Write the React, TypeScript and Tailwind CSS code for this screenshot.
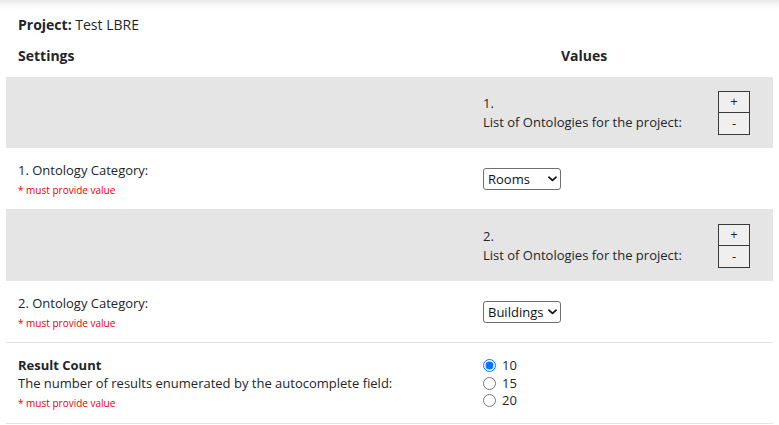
import { useState } from "react";

type OntologyRow = { id: number; value: string };

const ONTOLOGY_OPTIONS = ["Rooms", "Buildings", "People"];
const RESULT_COUNTS = ["10", "15", "20"];

function Chevron() {
  return (
    <svg viewBox="0 0 10 6" className="pointer-events-none absolute right-[4px] top-[8px] h-[6px] w-[9px]" aria-hidden="true">
      <path d="M1 1l4 3.6L9 1" fill="none" stroke="#111" strokeWidth="1.9" strokeLinecap="round" strokeLinejoin="round" />
    </svg>
  );
}

function Required() {
  return <p className="mt-[4px] text-[10px] leading-[14px] text-[#e3000b]">* must provide value</p>;
}

export default function App() {
  const [rows] = useState<OntologyRow[]>([
    { id: 1, value: "Rooms" },
    { id: 2, value: "Buildings" },
  ]);
  const [count, setCount] = useState("10");

  return (
    <div className="min-h-screen bg-white font-['Open_Sans',sans-serif] text-[13px] text-[#212529] shadow-[inset_0_10px_9px_-8px_rgba(0,0,0,0.13)]">
      <div className="px-[6px] pt-[15px]">
        <p className="px-3 text-[14px] leading-[20px]">
          <span className="font-bold">Project:</span> Test LBRE
        </p>

        <div className="grid grid-cols-[465px_1fr] pt-[11px] pb-[11px] text-[14px] font-bold leading-[20px]">
          <div className="px-3">Settings</div>
          <div className="pl-[90px]">Values</div>
        </div>

        {rows.map((row) => (
          <div key={row.id}>
            <div className="grid h-[71px] grid-cols-[465px_1fr] items-center bg-[#e5e5e5]">
              <div />
              <div className="flex items-center justify-between pl-3 pr-[23px]">
                <div className="leading-[19px]">
                  <p>{row.id}.</p>
                  <p>List of Ontologies for the project:</p>
                </div>
                <div className="flex flex-col">
                  <button className="h-[22px] w-[32px] border border-[#3a3a3a] bg-[#efefef] text-[13px] leading-none">+</button>
                  <button className="h-[22px] w-[32px] border border-t-0 border-[#3a3a3a] bg-[#efefef] text-[13px] leading-none">-</button>
                </div>
              </div>
            </div>

            <div className="grid h-[62px] grid-cols-[465px_1fr] items-center border-b border-[#e2e3e6]">
              <div className="px-3">
                <p className="leading-[18px]">{row.id}. Ontology Category:</p>
                <Required />
              </div>
              <div className="pl-3">
                <div className="relative w-[78px]">
                  <select
                    defaultValue={row.value}
                    className="h-[22px] w-full appearance-none rounded-[3px] border border-[#6f6f6f] bg-white pl-[4px] pr-[14px] text-[13px] leading-[20px] text-[#111]"
                  >
                    {ONTOLOGY_OPTIONS.map((option) => (
                      <option key={option}>{option}</option>
                    ))}
                  </select>
                  <Chevron />
                </div>
              </div>
            </div>
          </div>
        ))}

        <div className="grid h-[81px] grid-cols-[465px_1fr] items-center border-b border-[#e2e3e6]">
          <div className="px-3">
            <p className="font-bold leading-[18px]">Result Count</p>
            <p className="leading-[18px]">The number of results enumerated by the autocomplete field:</p>
            <Required />
          </div>
          <div className="pl-3">
            {RESULT_COUNTS.map((value) => (
              <label key={value} className="flex h-[17.5px] items-center gap-[6px] leading-[17px]">
                <input
                  type="radio"
                  name="result-count"
                  value={value}
                  checked={count === value}
                  onChange={() => setCount(value)}
                  className="m-0 h-[13px] w-[13px]"
                />
                <span>{value}</span>
              </label>
            ))}
          </div>
        </div>
      </div>
    </div>
  );
}
